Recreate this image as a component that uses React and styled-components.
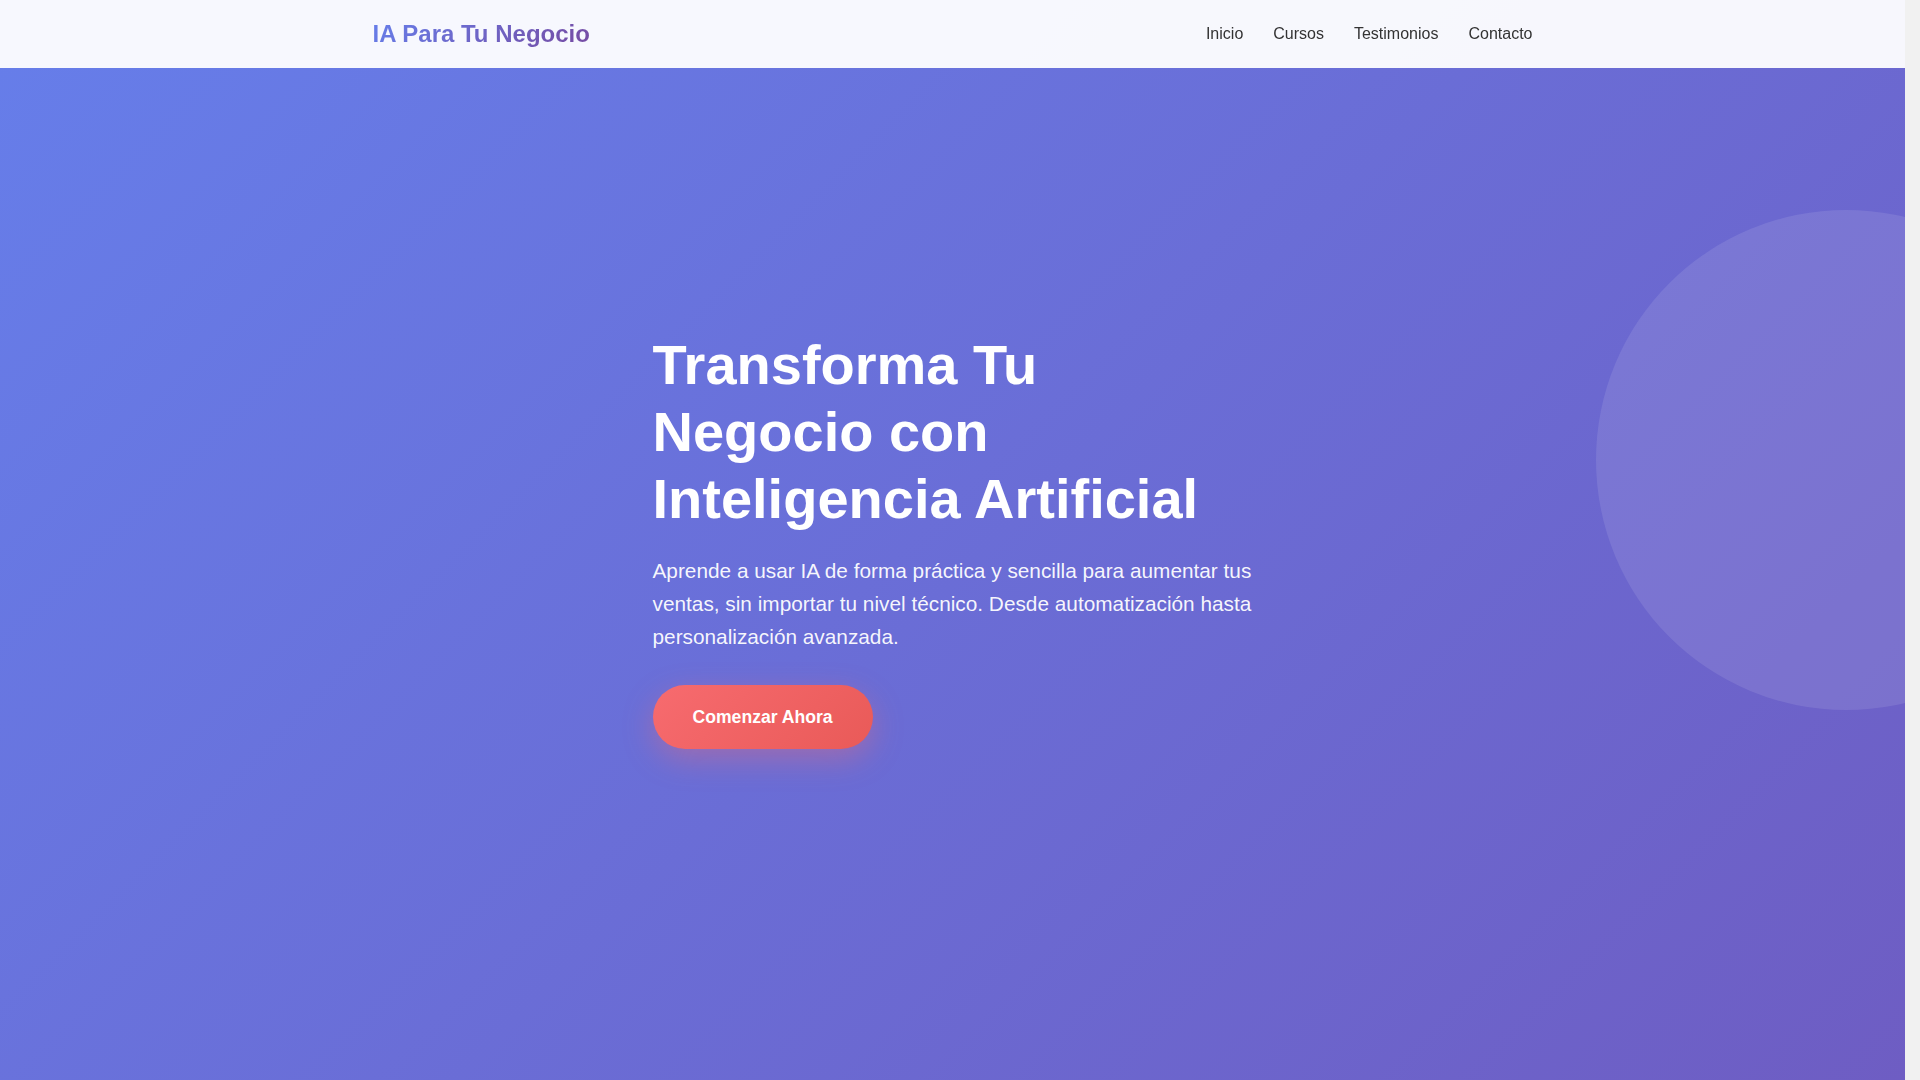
import React from "react";
import styled, { createGlobalStyle } from "styled-components";

const GlobalStyle = createGlobalStyle`
  *, *::before, *::after { box-sizing: border-box; }
  html, body { margin: 0; padding: 0; }
  body {
    font-family: "Liberation Sans", Arial, Helvetica, sans-serif;
    color: #333;
    background: #f1f1f1;
    line-height: 1.6;
    padding-right: 15px;
  }
`;

const Page = styled.div`
  position: relative;
  background: #ffffff;
`;

const Header = styled.header`
  position: fixed;
  top: 0;
  left: 0;
  right: 15px;
  z-index: 10;
  background: rgba(255, 255, 255, 0.95);
  padding: 20px 0;
`;

const Container = styled.div`
  max-width: 1200px;
  margin: 0 auto;
  padding: 0 20px;
`;

const HeaderBar = styled(Container)`
  display: flex;
  align-items: center;
  justify-content: space-between;
`;

const Logo = styled.div`
  font-size: 24px;
  font-weight: 700;
  line-height: normal;
  background: linear-gradient(135deg, #667eea 0%, #764ba2 100%);
  -webkit-background-clip: text;
  background-clip: text;
  color: transparent;
`;

const NavList = styled.ul`
  display: flex;
  gap: 30px;
  list-style: none;
  margin: 0;
  padding: 0;
`;

const NavLink = styled.a`
  color: #333;
  text-decoration: none;
  font-size: 16px;
  line-height: normal;
`;

const Hero = styled.section`
  position: relative;
  overflow: hidden;
  min-height: 100vh;
  display: flex;
  align-items: center;
  justify-content: center;
  background: linear-gradient(135deg, #667eea 0%, #6e5dc3 100%);
  color: #fff;

  &::before {
    content: "";
    position: absolute;
    top: 210px;
    right: -10%;
    width: 500px;
    height: 500px;
    border-radius: 50%;
    background: rgba(255, 255, 255, 0.1);
  }
`;

const HeroContent = styled.div`
  position: relative;
  z-index: 1;
  width: 100%;
  max-width: 600px;
`;

const Title = styled.h1`
  margin: 0 0 21px;
  font-size: 56px;
  font-weight: 700;
  line-height: 1.2;
`;

const Lead = styled.p`
  margin: 0 0 31.5px;
  font-size: 1.3rem;
  line-height: 1.6;
  color: rgba(255, 255, 255, 0.95);
`;

const CTA = styled.a`
  display: inline-block;
  padding: 22px 40px;
  border-radius: 50px;
  background: linear-gradient(135deg, #f76b6f 0%, #e95a58 100%);
  color: #fff;
  font-size: 17.6px;
  font-weight: 700;
  line-height: 20px;
  text-decoration: none;
  box-shadow: 0 10px 30px rgba(255, 107, 107, 0.35);
`;

export default function App() {
  return (
    <Page>
      <GlobalStyle />
      <Header>
        <HeaderBar>
          <Logo>IA Para Tu Negocio</Logo>
          <nav>
            <NavList>
              <li><NavLink href="#inicio">Inicio</NavLink></li>
              <li><NavLink href="#cursos">Cursos</NavLink></li>
              <li><NavLink href="#testimonios">Testimonios</NavLink></li>
              <li><NavLink href="#contacto">Contacto</NavLink></li>
            </NavList>
          </nav>
        </HeaderBar>
      </Header>
      <Hero id="inicio">
        <HeroContent>
          <Title>Transforma Tu Negocio con Inteligencia Artificial</Title>
          <Lead>
            Aprende a usar IA de forma práctica y sencilla para aumentar tus ventas, sin importar tu nivel técnico. Desde automatización hasta personalización avanzada.
          </Lead>
          <CTA href="#cursos">Comenzar Ahora</CTA>
        </HeroContent>
      </Hero>
    </Page>
  );
}
